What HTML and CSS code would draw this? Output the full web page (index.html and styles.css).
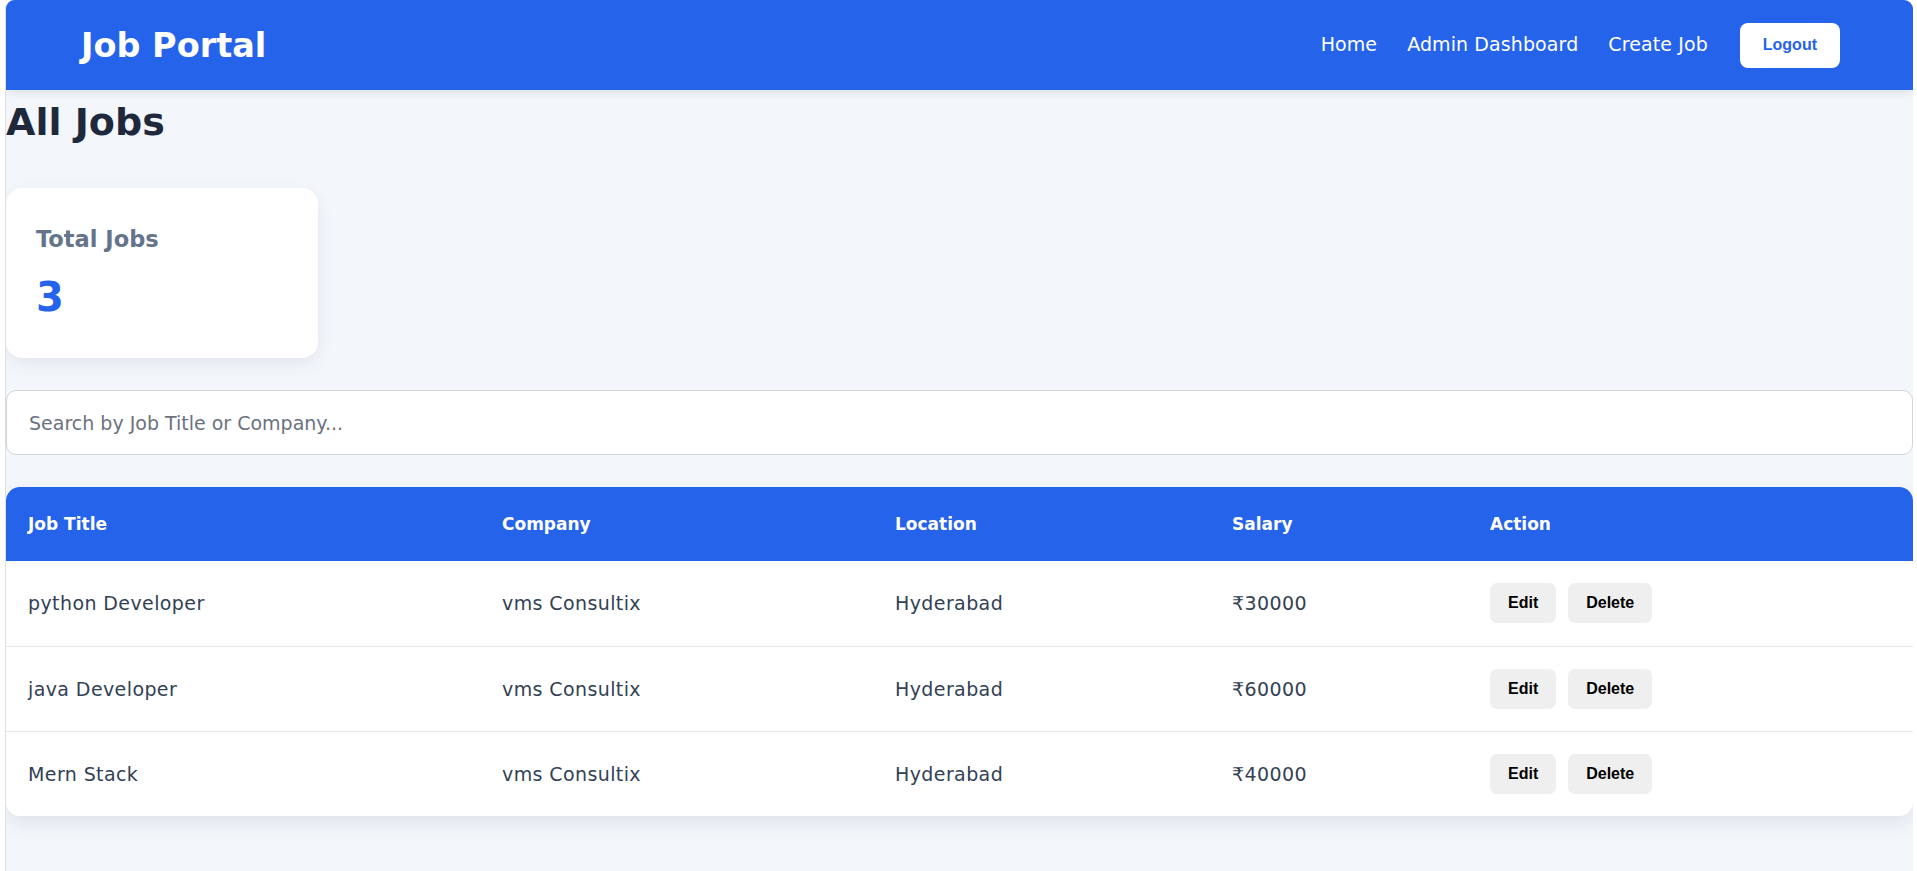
FILE: index.html
```html
<!DOCTYPE html>
<html lang="en">
  <head>
    <meta charset="UTF-8" />
    <meta name="viewport" content="width=device-width, initial-scale=1.0" />
    <title>Job Portal - Admin</title>
    <link rel="stylesheet" href="styles.css">
  </head>
  <body>
    <div class="app">
      <nav class="navbar">
        <div class="logo">Job Portal</div>
        <div class="nav-links">
          <a href="#">Home</a>
          <a href="#">Admin Dashboard</a>
          <a href="#">Create Job</a>
          <button class="logout-btn">Logout</button>
        </div>
      </nav>

      <main class="dashboard">
        <h1>All Jobs</h1>

        <div class="stats">
          <div class="stat-card">
            <h3>Total Jobs</h3>
            <p>3</p>
          </div>
        </div>

        <input
          type="text"
          class="search-input"
          placeholder="Search by Job Title or Company..."
        />

        <div class="table-wrap">
          <table class="job-table">
            <colgroup>
              <col class="col-title" />
              <col class="col-company" />
              <col class="col-location" />
              <col class="col-salary" />
              <col class="col-action" />
            </colgroup>
            <thead>
              <tr>
                <th>Job Title</th>
                <th>Company</th>
                <th>Location</th>
                <th>Salary</th>
                <th>Action</th>
              </tr>
            </thead>
            <tbody>
              <tr>
                <td>python Developer</td>
                <td>vms Consultix</td>
                <td>Hyderabad</td>
                <td>₹30000</td>
                <td>
                  <div class="actions">
                    <button class="edit-btn">Edit</button>
                    <button class="delete-btn">Delete</button>
                  </div>
                </td>
              </tr>
              <tr>
                <td>java Developer</td>
                <td>vms Consultix</td>
                <td>Hyderabad</td>
                <td>₹60000</td>
                <td>
                  <div class="actions">
                    <button class="edit-btn">Edit</button>
                    <button class="delete-btn">Delete</button>
                  </div>
                </td>
              </tr>
              <tr>
                <td>Mern Stack</td>
                <td>vms Consultix</td>
                <td>Hyderabad</td>
                <td>₹40000</td>
                <td>
                  <div class="actions">
                    <button class="edit-btn">Edit</button>
                    <button class="delete-btn">Delete</button>
                  </div>
                </td>
              </tr>
            </tbody>
          </table>
        </div>
      </main>
    </div>
  </body>
</html>
```

FILE: styles.css
```css
* {
  margin: 0;
  padding: 0;
  box-sizing: border-box;
}

body {
  font-family: "DejaVu Sans", "Noto Sans", sans-serif;
  background: #ffffff;
  min-height: 100vh;
}

.app {
  margin: 0 4px 0 5px;
  min-height: 100vh;
  border-left: 1px solid #dcdfe4;
  border-radius: 9px 9px 0 0;
  background: #f3f6fb;
  overflow: hidden;
}

/* top bar */
.navbar {
  height: 90px;
  padding: 0 73px 0 75px;
  display: flex;
  align-items: center;
  justify-content: space-between;
  background: #2563eb;
  box-shadow: 0 2px 10px rgba(0, 0, 0, 0.1);
  position: relative;
}

.logo {
  color: #ffffff;
  font-size: 33.5px;
  font-weight: 700;
}

.nav-links {
  display: flex;
  align-items: center;
  gap: 30px;
}

.nav-links a {
  color: #ffffff;
  text-decoration: none;
  font-size: 19px;
  letter-spacing: 0.1px;
  margin-top: -2px;
}

.logout-btn {
  height: 45px;
  padding: 0 23px;
  margin-left: 2px;
  border: none;
  border-radius: 8px;
  background: #ffffff;
  color: #2563eb;
  font-family: "Liberation Sans", Arial, sans-serif;
  font-size: 16px;
  font-weight: 700;
  cursor: pointer;
}

/* page body */
.dashboard {
  padding: 8px 0 40px;
}

.dashboard h1 {
  color: #1e293b;
  font-size: 38px;
  font-weight: 700;
  line-height: 48px;
}

.stats {
  display: flex;
  margin-top: 42px;
}

.stat-card {
  width: 312px;
  height: 170px;
  padding: 38px 30px 30px;
  background: #ffffff;
  border-radius: 16px;
  box-shadow: 0 6px 18px rgba(15, 23, 42, 0.07);
}

.stat-card h3 {
  color: #64748b;
  font-size: 22.5px;
  font-weight: 700;
  line-height: 26px;
}

.stat-card p {
  margin-top: 21px;
  color: #2563eb;
  font-size: 40px;
  font-weight: 700;
  line-height: 48px;
}

.search-input {
  display: block;
  width: 100%;
  height: 65px;
  margin-top: 32px;
  padding: 0 22px;
  border: 1px solid #d1d5db;
  border-radius: 10px;
  background: #ffffff;
  font-family: inherit;
  font-size: 19px;
  color: #374151;
  outline: none;
}

.search-input::placeholder {
  color: #6b7280;
}

/* jobs table */
.table-wrap {
  margin-top: 32px;
  background: #ffffff;
  border-radius: 14px;
  overflow: hidden;
  box-shadow: 0 8px 20px rgba(15, 23, 42, 0.08);
}

.job-table {
  width: 100%;
  border-collapse: collapse;
  table-layout: fixed;
}

.col-title { width: 474px; }
.col-company { width: 393px; }
.col-location { width: 337px; }
.col-salary { width: 258px; }

.job-table th {
  height: 74px;
  padding: 0 22px;
  background: #2563eb;
  color: #ffffff;
  text-align: left;
  font-size: 17px;
  font-weight: 700;
}

.job-table td {
  height: 85px;
  padding: 0 22px;
  color: #334155;
  font-size: 19px;
  letter-spacing: 0.4px;
  border-bottom: 1px solid #e5e7eb;
}

.job-table tbody tr:last-child td {
  border-bottom: none;
}

.actions {
  display: flex;
  gap: 12px;
}

.edit-btn,
.delete-btn {
  height: 40px;
  padding: 0 18px;
  border: none;
  border-radius: 7px;
  background: #efefef;
  color: #000000;
  font-family: "Liberation Sans", Arial, sans-serif;
  font-size: 16px;
  font-weight: 700;
  letter-spacing: 0;
  cursor: pointer;
}
```
